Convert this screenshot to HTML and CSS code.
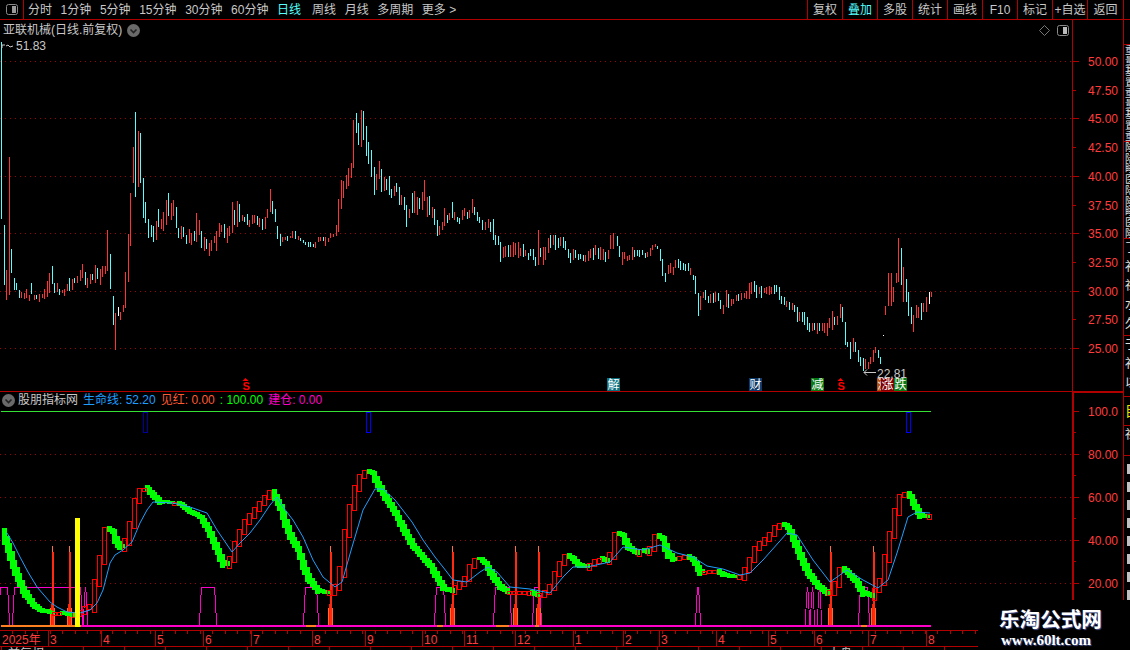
FILE: index.html
```html
<!DOCTYPE html>
<html lang="zh">

<head>
    <meta charset="UTF-8">
    <title>亚联机械 日线</title>
    <link rel="stylesheet" href="styles.css">
</head>

<body>
    <div class="page">
        <div class="toolbar">
            <div class="tool-toggle">
                <svg width="12" height="11" viewBox="0 0 12 11"><rect x="0.5" y="0.5" width="11" height="10" rx="2" fill="#000" stroke="#8a8a8a"/><rect x="6" y="2" width="4" height="7" fill="#9a9a9a"/></svg>
            </div>
            <div class="tool-periods">
                <span>分时</span>
                <span>1分钟</span>
                <span>5分钟</span>
                <span>15分钟</span>
                <span>30分钟</span>
                <span>60分钟</span>
                <span class="active">日线</span>
                <span>周线</span>
                <span>月线</span>
                <span>多周期</span>
                <span>更多 &gt;</span>
            </div>
            <div class="tool-buttons">
                <span class="tool-btn">复权</span>
                <span class="tool-btn active">叠加</span>
                <span class="tool-btn">多股</span>
                <span class="tool-btn">统计</span>
                <span class="tool-btn">画线</span>
                <span class="tool-btn">F10</span>
                <span class="tool-btn">标记</span>
                <span class="tool-btn">+自选</span>
                <span class="tool-btn last">返回</span>
            </div>
        </div>

        <div class="workspace">
            <div class="charts">
                <div class="pane price-pane">
                    <svg id="price-plot" class="plot" width="1072" height="371" viewBox="0 20 1072 371"></svg>
                    <div class="axis">
                        <svg id="price-axis" width="50" height="371" viewBox="1073 20 50 371"></svg>
                    </div>
                    <div class="pane-title">
                        <span>亚联机械(日线.前复权)</span>
                        <svg class="chevron" width="13" height="13" viewBox="0 0 13 13"><circle cx="6.5" cy="6.5" r="6.5" fill="#6a6a6a"/><path d="M3.5 5.5 L6.5 8.5 L9.5 5.5" fill="none" stroke="#222" stroke-width="1.6"/></svg>
                    </div>
                    <div class="pane-tools">
                        <svg width="11" height="11" viewBox="0 0 11 11"><path d="M5.5 0.5 L10.5 5.5 L5.5 10.5 L0.5 5.5 Z" fill="none" stroke="#777"/></svg>
                        <svg width="12" height="11" viewBox="0 0 12 11"><rect x="0.5" y="0.5" width="11" height="10" rx="2" fill="#000" stroke="#8a8a8a"/><rect x="6" y="2" width="4" height="7" fill="#bbb"/></svg>
                    </div>
                </div>

                <div class="pane indicator-pane">
                    <svg id="ind-plot" class="plot" width="1072" height="238" viewBox="0 392 1072 238"></svg>
                    <div class="axis">
                        <svg id="ind-axis" width="49" height="237" viewBox="1074 393 49 237"></svg>
                    </div>
                    <div class="pane-title ind-title">
                        <svg class="chevron" width="13" height="13" viewBox="0 0 13 13"><circle cx="6.5" cy="6.5" r="6.5" fill="#6a6a6a"/><path d="M3.5 5.5 L6.5 8.5 L9.5 5.5" fill="none" stroke="#222" stroke-width="1.6"/></svg>
                        <span>股朋指标网</span>
                        <span class="c-blue">生命线: 52.20</span>
                        <span class="c-orange">见红: 0.00</span>
                        <span class="c-green">: 100.00</span>
                        <span class="c-pink">建仓: 0.00</span>
                    </div>
                </div>

                <svg id="date-axis" class="date-axis" width="1123" height="20" viewBox="0 630 1123 20"></svg>
            </div>

            <div class="side">
                <div class="side-cell"></div>
                <div class="side-cell">重<br>量<br>基<br>置<br>重<br>量<br>基<br>置<br>重</div>
                <div class="side-cell">隆<br>陆<br>睡<br>医<br>陆<br>隆<br>睡<br>医<br>隆</div>
                <div class="side-cell wide">了<br>补<br>社<br>水<br>久</div>
                <div class="side-cell wide">于<br>补<br>以</div>
                <div class="side-cell yellow">目</div>
                <div class="side-cell wide">社</div>
                <div class="side-cell blocks"></div>
            </div>
        </div>

        <div class="watermark">
            <div class="wm-name">乐淘公式网</div>
            <div class="wm-url">www.60lt.com</div>
        </div>
    </div>

    <script src="chart.js"></script>
</body>

</html>
```

FILE: styles.css
```css
* {
    box-sizing: border-box;
}

body {
    margin: 0;
    background-color: #000;
    font-family: "Liberation Sans", "Noto Sans CJK SC", sans-serif;
    font-size: 12px;
    color: #c8c8c8;
}

.page {
    position: relative;
    width: 1130px;
    height: 650px;
    overflow: hidden;
    background-color: #000;
}

svg {
    display: block;
}

/* top bar */
.toolbar {
    display: flex;
    height: 20px;
    border-bottom: 1px solid #b00000;
    line-height: 20px;
    white-space: nowrap;
}

.tool-toggle {
    display: flex;
    align-items: center;
    justify-content: center;
    width: 24px;
    border-right: 1px solid #b00000;
}

.tool-periods {
    display: flex;
    gap: 8.6px;
    padding-left: 4px;
}

.tool-periods .active {
    margin-right: 2.4px;
}

.tool-buttons {
    display: flex;
    margin-left: auto;
    padding-right: 6px;
}

.tool-btn {
    width: 35px;
    border-left: 1px solid #b00000;
    text-align: center;
}

.tool-btn.last {
    width: 37px;
    border-right: 1px solid #b00000;
}

.active {
    color: #55ffff;
}

/* chart area */
.workspace {
    display: flex;
    height: 630px;
}

.charts {
    width: 1123px;
}

.pane {
    position: relative;
    display: flex;
}

.price-pane {
    height: 372px;
    border-bottom: 1px solid #b00000;
}

.indicator-pane {
    height: 238px;
}

.plot {
    flex: none;
}

.axis {
    width: 51px;
    border-left: 1px solid #b00000;
}

.indicator-pane .axis {
    border-left-width: 2px;
    border-top: 1px solid #b00000;
}

.plot text,
.date-axis text {
    font-family: "Liberation Sans", "Noto Sans CJK SC", sans-serif;
}

.pane-title {
    position: absolute;
    left: 3px;
    top: 2px;
    display: flex;
    align-items: center;
    gap: 5px;
    line-height: 16px;
    white-space: nowrap;
}

.ind-title {
    left: 2px;
    top: 0;
}

.ind-title .chevron {
    margin-right: -2px;
}

.c-blue {
    color: #1e9fff;
}

.c-orange {
    color: #ff5a32;
}

.c-green {
    color: #00ff00;
}

.c-pink {
    color: #ff00c8;
}

.pane-tools {
    position: absolute;
    left: 1039px;
    top: 5px;
    display: flex;
    gap: 7px;
}

.date-axis {
    overflow: hidden;
}

/* cut off watchlist on the far right */
.side {
    display: grid;
    grid-template-rows: 25px 97px 97px 97px 61px 29px 30px 194px;
    width: 7px;
    border-left: 1px solid #b00000;
    overflow: hidden;
}

.side-cell {
    padding-left: 1px;
    border-bottom: 1px solid #b00000;
    overflow: hidden;
    font-size: 10.5px;
    line-height: 10.7px;
    color: #e0e0e0;
}

.side-cell.wide {
    font-size: 12px;
    line-height: 19px;
}

.side-cell.yellow {
    line-height: 28px;
    font-size: 14px;
    color: #e6e600;
}

.side-cell.blocks {
    border-bottom: none;
    background: linear-gradient(90deg, #000 3px, transparent 3px),
        repeating-linear-gradient(180deg, #000 0, #000 8px, #c0c0c0 8px, #c0c0c0 18px);
}

/* site stamp */
.watermark {
    position: absolute;
    right: 0;
    bottom: 0;
    width: 152px;
    height: 50px;
    padding: 5px 0 0 21px;
    background-color: #000;
    color: #fff;
    white-space: nowrap;
}

.wm-name {
    font-family: "Noto Sans CJK SC", sans-serif;
    font-size: 20.6px;
    font-weight: bold;
    line-height: 27px;
    text-shadow: 1px 1px 1px #46508c;
}

.wm-url {
    margin-top: 1px;
    margin-left: 2px;
    font-family: "Liberation Serif", serif;
    font-size: 15px;
    font-weight: bold;
    line-height: 14px;
    text-shadow: 1px 1px 1px #46508c;
}
```

FILE: chart.js
```js
const RED = '#ff3333';
const CYAN = '#54ffff';
const GRID = '#a00000';
const AXIS = '#b00000';
const LABEL = '#ff3c3c';

// daily bars, token = colour + x + top + bottom, read off the chart at 3x
const barBlocks = [
    { x0: 0, y0: 100, data: 'c4,-174,356 c13,375,555 r19,510,600 r28,170,585 c34,447,519 c43,534,570 c49,549,570 c58,570,594 r64,576,594 r73,579,597 r79,567,594 r88,585,603 c94,549,582 r103,585,600 c109,585,597 r118,582,606 r127,582,594 r133,567,597 r142,543,591 r148,519,579 c157,498,552 c163,549,579 r172,549,576 c178,567,585 r187,570,579 r193,567,588 r202,552,573 c208,534,573 r217,537,570 c223,534,549 r232,528,549 r241,510,543 r247,492,534 c256,516,555 r262,534,564 r271,522,552 c277,522,540 r286,495,549 c292,504,537 r301,507,555 r307,498,531 r316,498,522 r322,390,513 c331,462,567 c340,588,675 r346,639,750 w355,621,648 r361,636,660 r370,615,636 r376,516,624 r385,402,546 r391,279,438 r400,141,249 c406,36,291 r415,93,261 c421,99,249 c430,234,354 c436,306,369 c445,357,414 c454,375,411 c460,378,426 r469,363,420 c475,327,381 r484,357,387 r490,336,393 r499,300,375 c505,279,348 r514,309,360 r520,300,348 c529,321,384 c535,384,414 r544,378,417 c550,381,411 c559,405,432 r568,387,429' },
    { x0: 190, y0: 105, data: 'r3,385,420 c12,378,408 r18,324,411 r27,345,390 c33,378,429 r42,396,438 c48,402,432 r57,414,453 r63,405,438 r72,393,414 r79,378,438 r87,354,396 r93,360,381 c102,357,399 r111,369,414 r117,363,393 r126,291,384 c132,315,360 r141,288,366 c147,297,351 r156,330,348 c162,336,351 c171,327,360 r178,345,366 r187,330,357 r192,330,354 c201,333,360 r208,339,366 c217,342,375 r226,336,372 r232,312,339 r241,252,321 c247,288,327 c256,312,351 c262,363,402 c271,387,423 r277,396,411 r286,396,405 c292,393,408 r301,393,399 r307,378,399 c316,378,402 r325,393,405 c331,399,408 c340,405,414 c346,411,420 c355,411,426 c361,411,426 c370,417,426 r376,411,429 r385,396,411 r391,396,408 c400,396,408 r406,396,423 r415,399,411 r421,384,399 r430,387,396 r439,360,393 r445,282,381 r454,225,312 r460,228,279 r469,210,252 r475,189,243 r484,174,219 r490,45,189 c499,24,84 c505,54,120 r514,15,126 c520,18,105 c529,63,153 c535,111,177 c544,135,216 c553,186,270 r559,207,255 r568,168,222 c574,192,261 r583,216,258 c589,222,255 c598,213,270 c604,252,279 r613,243,273 c619,234,261 c628,246,300 r634,270,300 c643,276,315 c649,300,366 r658,312,339 c667,264,324 r673,258,324 r682,276,330 c688,279,312 r697,261,315 r703,225,288 r712,276,336 c718,273,330 r727,306,339 c733,312,360 c742,345,393 r748,363,390' },
    { x0: 430, y0: 170, data: 'r37,155,180 r43,115,170 c52,135,160 r58,130,152 c67,97,145 r73,125,148 c82,140,155 c88,145,162 r97,120,150 r103,115,140 c112,125,145 r118,120,145 r127,88,130 c133,110,135 c142,127,155 c148,140,158 c157,150,180 r166,155,178 r175,148,175 c181,155,185 c190,148,210 c196,195,225 c205,198,225 c211,215,275 r220,232,265 r226,228,262 c235,225,262 r241,225,260 r250,215,260 r256,218,255 r265,215,262 r271,235,260 c280,222,262 r286,240,258 c295,248,270 c301,238,260 c310,238,270 c316,262,290 r325,180,285 c331,235,262 r340,232,285 r346,230,270 r355,205,250 c361,195,235 r370,195,225 c376,195,240 c385,205,235 r391,202,228 c400,200,232 c406,212,240 c415,238,265 c421,248,278 r430,238,272 c436,240,265 c445,253,270 c451,252,268 c460,255,272 r466,255,276 r475,242,272 r481,238,265 c490,233,270 r496,225,255 c505,235,268 r511,230,268 r520,238,272 c526,245,275 r535,240,268 r541,195,238 r550,190,238 c562,198,228 c568,228,262 r577,245,285 r583,245,265 r592,258,272 r598,255,270 r607,230,268 c613,240,262 c622,240,258 c628,240,260 c637,240,255 c646,250,265 r652,245,260 r661,235,258 r667,225,240 r676,222,232 c682,228,236 c691,238,275 c697,268,318 c706,308,335 r715,285,312 r721,280,310 r730,290,315 r736,270,295 c745,268,295 c751,272,298 c760,278,300 c766,282,302 c775,280,305 r781,295,315 c790,315,330 c796,318,372 c805,370,438 r811,378,420 r820,365,382 c826,360,390 c835,378,400 r841,372,398 c850,370,400 r856,365,395 c865,368,392 c871,390,418 r880,405,432 r889,360,412 c895,372,415 r904,388,408 r910,388,402 r919,375,392 c925,372,392 r934,370,392 r943,370,385 r949,362,385 r958,338,385 r964,335,370 c973,332,365 c979,345,385 r988,350,372 c994,348,385 r1003,355,370 r1009,350,372 r1018,348,375 r1024,350,370 c1033,345,372 c1039,345,365 c1048,352,390 c1054,378,402 c1063,380,405 r1069,392,410 c1078,395,418 r1087,398,418 c1093,405,425 c1102,410,455 r1108,425,452 c1117,425,455 c1123,425,465 c1132,440,480 c1138,458,485 r1147,460,485 c1153,458,480 r1162,458,490 c1168,458,482 r1177,460,485 r1183,458,488 r1192,460,498 r1198,445,475 r1207,422,480 c1213,440,465 r1222,438,465 r1231,402,445 c1237,410,455 c1246,455,525 c1252,515,530 c1261,515,565 r1270,505,548 c1276,515,545 c1285,540,575 c1291,562,590 c1300,565,605 r1306,568,598 r1315,575,595 r1321,562,582 r1330,540,575 r1336,532,550 c1345,540,565 c1351,560,582 w1360,495,497 r1367,408,436 r1375,310,410 r1384,310,408 r1390,350,395 r1399,310,340 r1405,205,338 c1414,235,345 r1420,290,395 c1429,328,398 c1435,365,438 c1444,412,462 r1450,435,485 r1459,405,445 r1465,410,442 c1474,398,448 r1480,398,425 r1489,382,428 w1498,365,400 r1504,365,380' }
];

// centre of the thick band in the indicator, page pixels
const bandPoints = [[3,533],[8,548],[13,565],[18,578],[23,590],[28,598],[33,605],[40,610],[50,613],[60,613],[72,615],[80,612],[88,606],[93,605],[95,597],[97,580],[100,563],[103,553],[105,537],[107,528],[113,532],[115,540],[120,547],[125,546],[128,535],[131,527],[135,505],[140,490],[145,487],[150,492],[155,497],[160,502],[170,503],[178,503],[190,512],[200,517],[208,530],[217,550],[222,562],[228,565],[232,557],[235,547],[240,535],[245,523],[255,510],[265,498],[272,491],[280,507],[285,522],[290,535],[298,550],[303,565],[308,578],[317,590],[327,593],[335,590],[338,582],[342,567],[345,543],[348,523],[353,500],[358,483],[363,473],[367,471],[372,473],[377,483],[385,497],[395,513],[405,532],[412,545],[422,557],[430,565],[437,578],[443,588],[452,591],[458,585],[465,580],[468,575],[473,562],[478,558],[485,563],[493,577],[500,587],[507,592],[530,592],[538,596],[545,593],[552,585],[557,572],[562,562],[567,555],[572,558],[578,565],[588,567],[593,563],[600,558],[608,561],[612,553],[617,533],[622,535],[628,547],[637,553],[642,550],[647,552],[652,547],[657,535],[662,538],[667,552],[673,560],[678,557],[687,556],[693,560],[700,572],[717,571],[723,575],[733,577],[742,576],[747,568],[752,558],[758,545],[765,540],[773,532],[778,525],[783,524],[788,528],[795,543],[802,560],[808,573],[817,585],[827,593],[832,591],[837,582],[842,568],[847,572],[855,580],[862,592],[872,596],[878,587],[883,577],[888,550],[892,532],[895,517],[900,498],[903,493],[908,493],[913,503],[920,515],[927,517],[932,515]];

const lifeLine = [[7,533],[13,543],[20,557],[28,572],[37,587],[50,602],[57,607],[67,612],[80,613],[90,610],[97,603],[103,590],[110,563],[115,555],[123,550],[132,542],[140,523],[147,510],[153,502],[173,503],[190,507],[207,513],[217,530],[232,552],[240,543],[250,533],[260,520],[270,505],[277,497],[283,507],[293,520],[303,537],[313,560],[323,577],[335,587],[342,582],[352,547],[363,510],[375,489],[383,489],[395,500],[412,522],[423,540],[435,557],[443,567],[453,580],[467,582],[480,572],[488,567],[497,572],[510,587],[530,589],[550,593],[563,577],[573,567],[587,567],[610,562],[623,547],[643,550],[660,545],[677,553],[693,557],[707,566],[723,569],[740,575],[750,573],[763,560],[787,533],[797,535],[813,560],[830,582],[847,570],[863,580],[878,588],[888,580],[897,553],[908,517],[917,512],[930,513]];

// magenta pulses as [from, to]
const pulses = [[-2,10],[12,83],[83,88],[199,217],[303,319],[434,446],[493,512],[532,542],[695,701],[805,810],[810,815],[817,822],[858,870]];
const spikes = [52,69,330,452,515,538,830,873];

const blueBoxes = [[143,'#0000a0'],[366,'#0000ff'],[906,'#0000ff']];

const priceTicks = [50,47.5,45,42.5,40,37.5,35,32.5,30,27.5,25];
const indTicks = [100,80,60,40,20];
const months = [[48,'3'],[101,'4'],[155,'5'],[203,'6'],[251,'7'],[312,'8'],[365,'9'],[422,'10'],[464,'11'],[515,'12'],[573,'1'],[623,'2'],[659,'3'],[716,'4'],[768,'5'],[814,'6'],[868,'7'],[926,'8']];

const priceY = p => 61 + (50 - p) * 11.48;
const indY = v => 626 - v * 2.15;

function rect(x, y, w, h, fill) {
    return `<rect x="${x}" y="${y}" width="${w}" height="${h}" fill="${fill}" shape-rendering="crispEdges"/>`;
}

function dotted(y, x2) {
    return `<line x1="0" y1="${y + 0.5}" x2="${x2}" y2="${y + 0.5}" stroke="${GRID}" stroke-dasharray="1 4"/>`;
}

function text(x, y, str, fill, size, extra = '') {
    return `<text x="${x}" y="${y}" fill="${fill}" font-size="${size}" ${extra}>${str}</text>`;
}

function lineAt(points, x) {
    for (let i = 1; i < points.length; i++) {
        if (x <= points[i][0]) {
            const [x0, y0] = points[i - 1];
            const [x1, y1] = points[i];
            return y0 + (y1 - y0) * (x - x0) / (x1 - x0);
        }
    }
    return points[points.length - 1][1];
}

function drawBars() {
    const colours = { r: RED, c: CYAN, w: '#ffffff' };
    let out = '';
    barBlocks.forEach(block => {
        block.data.split(' ').forEach(tok => {
            const [x, top, bottom] = tok.slice(1).split(',').map(Number);
            const px = Math.floor(block.x0 + x / 3);
            const y = Math.round(block.y0 + top / 3);
            const h = Math.max(1, Math.round((bottom - top) / 3));
            out += rect(px, y, 1, h, colours[tok[0]]);
        });
    });
    return out;
}

function marker(x, label, bg) {
    return rect(x, 378, 13, 13, bg) +
        text(x + 0.5, 388.5, label, '#fff', 12);
}

function sMarker(x) {
    return `<path d="M${x + 2.5} 378 L${x + 5.5} 381 H${x - 0.5} Z" fill="#f00"/>` +
        text(x - 0.5, 390, 'S', '#f00', 11, 'font-weight="bold"');
}

function drawPrice() {
    let out = '';
    [50, 45, 40, 35, 30, 25].forEach(p => { out += dotted(Math.round(priceY(p)), 1072); });
    out += drawBars();

    // high / low callouts
    out += `<path d="M2 48 V45 H5 M6 46 L8 45 L10 47 L13 46" fill="none" stroke="#c8c8c8"/>`;
    out += text(16, 50, '51.83', '#c8c8c8', 12);
    out += `<path d="M876 372.5 H864 M867 369.5 L864 372.5 L867 375.5" fill="none" stroke="#c8c8c8"/>`;
    out += text(877, 378, '22.81', '#c8c8c8', 12);

    out += sMarker(243);
    out += marker(607, '解', '#0a7080');
    out += marker(749, '财', '#0c3a6a');
    out += marker(811, '减', '#0a7a14');
    out += sMarker(838);
    out += marker(877, '涨', '#b0500f');
    out += marker(881, '涨', '#800000');
    out += marker(894, '跌', '#0a7a14');
    document.getElementById('price-plot').innerHTML = out;

    let axis = '';
    priceTicks.forEach((p, i) => {
        const y = Math.round(priceY(p));
        axis += rect(1073, y, i % 2 ? 3 : 6, 1, AXIS);
        axis += text(1118, y + 4.5, p.toFixed(2), LABEL, 12, 'text-anchor="end"');
    });
    document.getElementById('price-axis').innerHTML = axis;
}

function pulsePath(from, to) {
    const edge = Math.min(3, (to - from) / 2);
    return `M${from} 626 L${from + edge * 0.3} 615 L${from + edge * 0.6} 597 L${from + edge} 587 ` +
        `L${to - edge} 587 L${to - edge * 0.6} 597 L${to - edge * 0.3} 615 L${to} 626 `;
}

function drawSpike(x) {
    return rect(x - 2, 608, 1, 18, '#ff6a30') + rect(x + 2, 608, 1, 18, '#ff6a30') +
        rect(x - 1, 604, 3, 22, '#ff2000') +
        rect(x, 552, 2, 74, '#ff2a10') +
        rect(x, 546, 1, 6, '#ff7040');
}

// one block per trading day: green filled going down, red hollow going up
function drawBand() {
    let green = '';
    let red = '';
    for (let k = 0; k < 372; k++) {
        const x = 2 + k * 2.5;
        const a = lineAt(bandPoints, x);
        const b = lineAt(bandPoints, x + 2.5);
        if (b > a) {
            const h = b - a;
            green += rect(Math.round(x), Math.round(a - 2), 5, Math.round(h * 1.8 + 3), '#00ff00');
        } else if (k % 2 === 0) {
            const end = lineAt(bandPoints, x + 5);
            const top = Math.min(a, end);
            const rise = Math.abs(a - end);
            const y = Math.round(top - 1) + 0.5;
            red += `<rect x="${Math.round(x) + 0.5}" y="${y}" width="4" height="${Math.round(rise * 1.2 + 3)}" fill="none" stroke="#ff0000" shape-rendering="crispEdges"/>`;
        }
    }
    return green + red;
}

function drawIndicator() {
    let out = '';
    [80, 60, 40, 20].forEach(v => { out += dotted(Math.round(indY(v)), 1072); });
    out += rect(1, 411, 930, 1, '#33e033');

    blueBoxes.forEach(([x, colour]) => {
        out += `<rect x="${x + 0.5}" y="412.5" width="4" height="20" fill="none" stroke="${colour}" shape-rendering="crispEdges"/>`;
    });

    out += `<path d="${pulses.map(p => pulsePath(p[0], p[1])).join('')}" fill="none" stroke="#ff00c8" shape-rendering="crispEdges"/>`;
    spikes.forEach(x => { out += drawSpike(x); });
    out += drawBand();

    const life = lifeLine.map(p => p.join(',')).join(' ');
    out += `<polyline points="${life}" fill="none" stroke="#1e9fff"/>`;

    out += rect(1, 625, 930, 2, '#ff00c8');
    out += rect(1, 625, 80, 2, '#ff8020');
    [[303,319],[434,446],[493,512],[532,542],[858,870]].forEach(p => {
        out += rect(p[0] + 3, 625, p[1] - p[0] - 6, 2, '#ff8020');
    });
    out += rect(75, 518, 5, 109, '#ffff00');
    document.getElementById('ind-plot').innerHTML = out;

    let axis = '';
    indTicks.forEach(v => {
        const y = Math.round(indY(v));
        axis += rect(1074, y, 5, 1, AXIS);
        axis += rect(1074, y + 21, 2, 1, AXIS);
        axis += text(1118, y + 4.5, v === 100 ? '100.0' : v.toFixed(2), LABEL, 12, 'text-anchor="end"');
    });
    document.getElementById('ind-axis').innerHTML = axis;
}

function drawDates() {
    let out = rect(0, 630, 978, 1, AXIS) + rect(0, 646, 978, 1, AXIS);
    for (let x = 12; x < 978; x += 12.5) {
        out += rect(Math.round(x), 631, 1, 3, AXIS);
    }
    out += text(2, 644, '2025年', LABEL, 12);
    months.forEach(([x, label]) => {
        out += rect(x, 630, 1, 16, AXIS);
        out += text(x + 2, 644, label, LABEL, 12);
    });
    for (let x = 1; x < 978; x += 41) {
        out += rect(x, 647, 1, 3, AXIS);
    }
    // status line, only its top pixels fall inside the window
    out += text(8, 658, '前复权', '#c8c8c8', 12);
    out += text(828, 658, '大盘', '#c8c8c8', 12);
    document.getElementById('date-axis').innerHTML = out;
}

drawPrice();
drawIndicator();
drawDates();
```
